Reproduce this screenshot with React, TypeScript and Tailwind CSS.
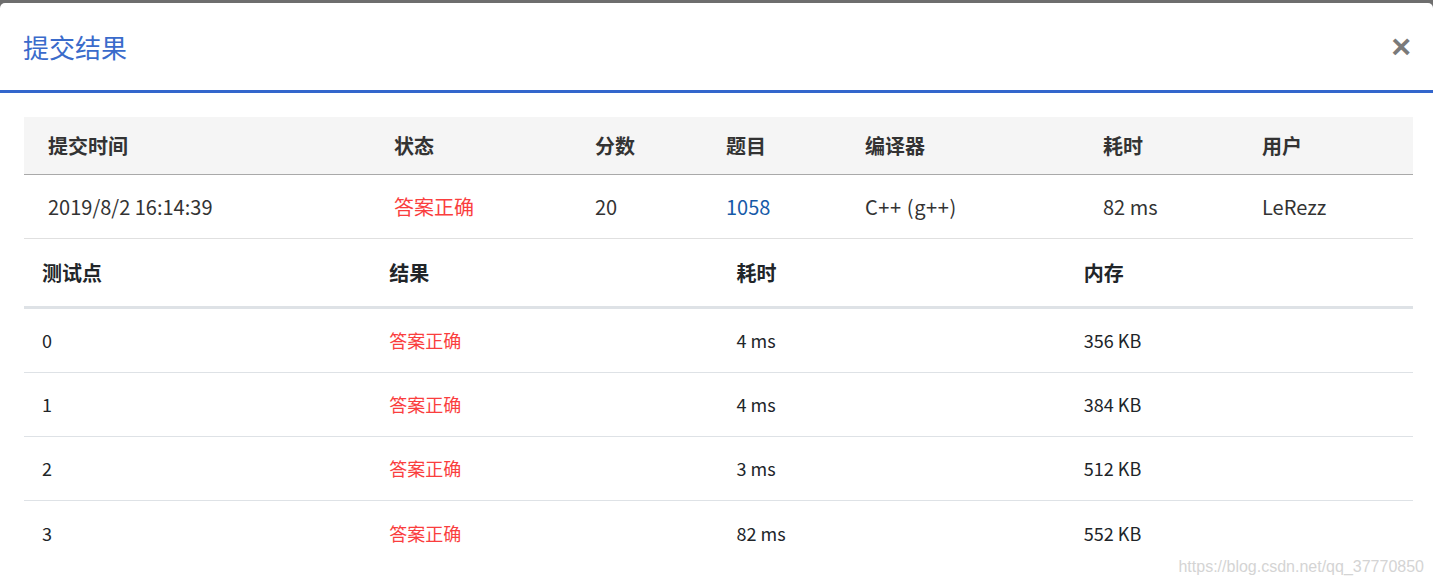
import React from "react";

const font = { fontFamily: '"Noto Sans CJK SC", "Noto Sans", sans-serif' };

const t1Cols = "grid grid-cols-[346px_201px_131px_139px_238px_159px_175px]";

const rows = [
  { id: "0", time: "4 ms", mem: "356 KB" },
  { id: "1", time: "4 ms", mem: "384 KB" },
  { id: "2", time: "3 ms", mem: "512 KB" },
  { id: "3", time: "82 ms", mem: "552 KB" },
];

export default function App() {
  return (
    <div
      className="relative h-[587px] w-full overflow-hidden bg-[#6e6e6e] pt-[3px]"
      style={font}
    >
      <div className="h-full rounded-t-[5px] bg-white">
        {/* Header */}
        <div className="flex h-[90px] items-center justify-between border-b-[3px] border-[#3366cc] pl-[23px] pr-[22px]">
          <h1 className="text-[26px] font-normal leading-none text-[#3a6bcb]">
            提交结果
          </h1>
          <button
            className="pb-[2px] text-[34px] font-bold leading-none text-[#7a7a7a]"
            style={{ fontFamily: '"Liberation Sans", Arial, sans-serif' }}
          >
            ×
          </button>
        </div>

        {/* Body */}
        <div className="pl-6 pr-5 pt-6">
          {/* Table 1 */}
          <div className={`${t1Cols} h-[58px] items-center border-b border-[#a9a9a9] bg-[#f5f5f5] text-[20px] font-bold text-[#333]`}>
            {["提交时间", "状态", "分数", "题目", "编译器", "耗时", "用户"].map((h) => (
              <div key={h} className="pl-6">{h}</div>
            ))}
          </div>
          <div className={`${t1Cols} h-[64px] items-center border-b border-[#e0e0e0] text-[20px] text-[#333]`}>
            <div className="pl-6">2019/8/2 16:14:39</div>
            <div className="pl-6 text-[#fa3e3e]">答案正确</div>
            <div className="pl-6">20</div>
            <div className="pl-6 text-[#165aa8]">1058</div>
            <div className="pl-6 tracking-[0.6px]">C++ (g++)</div>
            <div className="pl-6">82 ms</div>
            <div className="pl-6">LeRezz</div>
          </div>

          {/* Table 2 */}
          <div className="grid h-[70px] grid-cols-4 items-center border-b-[3px] border-[#dee2e6] text-[20px] font-bold text-[#212529]">
            {["测试点", "结果", "耗时", "内存"].map((h) => (
              <div key={h} className="pl-[18px]">{h}</div>
            ))}
          </div>
          {rows.map((r, i) => (
            <div
              key={r.id}
              className={`grid h-[64px] grid-cols-4 items-center text-[18px] text-[#212529] ${
                i < rows.length - 1 ? "border-b border-[#dee2e6]" : ""
              }`}
            >
              <div className="pl-[18px]">{r.id}</div>
              <div className="pl-[18px] text-[#fa3e3e]">答案正确</div>
              <div className="pl-[18px]">{r.time}</div>
              <div className="pl-[18px]">{r.mem}</div>
            </div>
          ))}
        </div>
      </div>

      <div
        className="absolute bottom-[8px] right-[9px] text-[16px] text-[#d4d4d4]"
        style={{ fontFamily: '"Liberation Sans", Arial, sans-serif' }}
      >
        https://blog.csdn.net/qq_37770850
      </div>
    </div>
  );
}
